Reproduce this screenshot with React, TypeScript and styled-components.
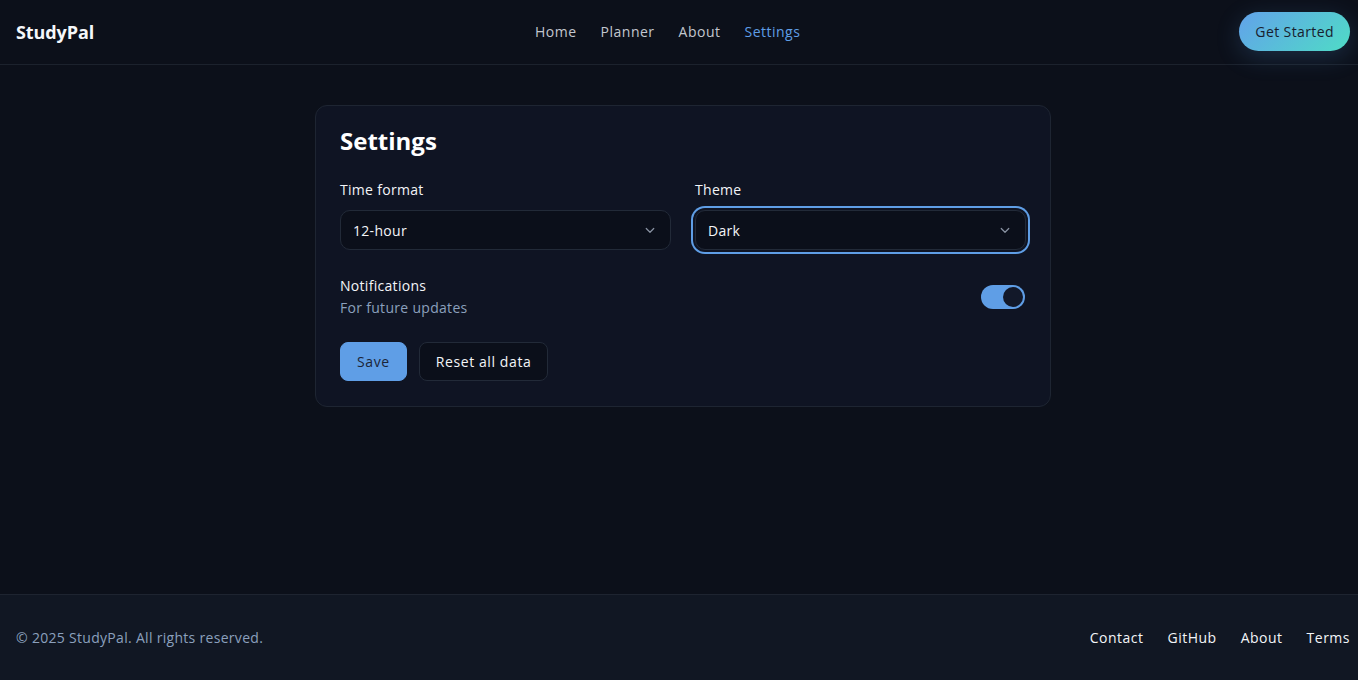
import React, { useState } from "react";
import styled, { createGlobalStyle } from "styled-components";

const Global = createGlobalStyle`
  * { box-sizing: border-box; }
  html, body { margin: 0; padding: 0; background: #0c101a; }
  body { font-family: "Open Sans", "Liberation Sans", sans-serif; color: #f1f4f9; letter-spacing: 0.3px; }
`;

const Page = styled.div`
  min-height: 680px;
  display: flex;
  flex-direction: column;
  background: #0c101a;
`;

const Header = styled.header`
  height: 65px;
  display: flex;
  align-items: center;
  justify-content: space-between;
  padding: 0 8px 1px 16px;
  border-bottom: 1px solid #1c222d;
`;

const Logo = styled.div`
  font-size: 18px;
  font-weight: 700;
  letter-spacing: -0.1px;
  color: #f5f7fa;
`;

const Nav = styled.nav`
  display: flex;
  gap: 24px;
  margin-left: 2px;
`;

const NavLink = styled.a<{ $active?: boolean }>`
  font-size: 14px;
  font-weight: 500;
  letter-spacing: 0.5px;
  color: ${(p) => (p.$active ? "#5f9ee6" : "#c3c7cf")};
  text-decoration: none;
`;

const CTA = styled.button`
  height: 39px;
  padding: 0 16px;
  border: none;
  border-radius: 999px;
  font-family: inherit;
  font-size: 14px;
  letter-spacing: 0.4px;
  color: #18202e;
  background: linear-gradient(135deg, #62a2ea 0%, #4fdcc6 100%);
  box-shadow: 0 6px 24px rgba(80, 150, 220, 0.22);
`;

const Main = styled.main`
  flex: 1;
  padding: 40px 16px 40px 24px;
`;

const Card = styled.section`
  max-width: 736px;
  margin: 0 auto;
  background: #0f1423;
  border: 1px solid #1e2532;
  border-radius: 12px;
  padding: 19px 24px 25px;
`;

const Title = styled.h1`
  margin: 0 0 23px;
  font-size: 24px;
  font-weight: 700;
  line-height: 32px;
  letter-spacing: 0;
  color: #ffffff;
`;

const Grid = styled.div`
  display: grid;
  grid-template-columns: 1fr 1fr;
  gap: 24px;
`;

const Field = styled.div`
  display: flex;
  flex-direction: column;
  gap: 10px;
`;

const Label = styled.label`
  font-size: 14px;
  font-weight: 500;
  line-height: 20px;
  color: #f3f5f8;
`;

const SelectWrap = styled.div<{ $focused?: boolean }>`
  position: relative;
  height: 40px;
  border-radius: 10px;
  border: 1px solid #222a38;
  background: #0b0f1a;
  box-shadow: ${(p) => (p.$focused ? "0 0 0 2px #0f1423, 0 0 0 4px #5f9ee6" : "none")};
  display: flex;
  align-items: center;
`;

const Select = styled.select`
  appearance: none;
  width: 100%;
  height: 100%;
  background: transparent;
  border: none;
  outline: none;
  color: #f3f5f8;
  font-family: inherit;
  letter-spacing: 0.3px;
  font-size: 14px;
  padding: 0 40px 0 12px;
`;

const Chevron = styled.svg`
  position: absolute;
  right: 11px;
  top: 50%;
  transform: translateY(-50%);
  pointer-events: none;
`;

const NotifyRow = styled.div`
  margin-top: 26px;
  display: flex;
  align-items: center;
  justify-content: space-between;
`;

const NotifyText = styled.div`
  display: flex;
  flex-direction: column;
  gap: 2px;
`;

const NotifyTitle = styled.div`
  font-size: 14px;
  font-weight: 500;
  line-height: 20px;
  color: #f3f5f8;
`;

const NotifySub = styled.div`
  font-size: 14px;
  line-height: 20px;
  color: #8ba0bd;
`;

const Toggle = styled.button<{ $on: boolean }>`
  width: 44px;
  height: 24px;
  border-radius: 999px;
  border: none;
  padding: 2px;
  margin-right: 1px;
  background: ${(p) => (p.$on ? "#5f9ee6" : "#2a3242")};
  display: flex;
  justify-content: ${(p) => (p.$on ? "flex-end" : "flex-start")};
  cursor: pointer;
`;

const Knob = styled.span`
  width: 20px;
  height: 20px;
  border-radius: 50%;
  background: #121829;
`;

const Actions = styled.div`
  margin-top: 24px;
  display: flex;
  gap: 12px;
`;

const Btn = styled.button<{ $primary?: boolean }>`
  height: 39px;
  padding: 0 16px;
  border-radius: 8px;
  font-family: inherit;
  font-size: 14px;
  letter-spacing: 0.6px;
  font-weight: ${(p) => (p.$primary ? 400 : 500)};
  color: ${(p) => (p.$primary ? "#1b2538" : "#f3f5f8")};
  background: ${(p) => (p.$primary ? "#5f9ee6" : "#0b0f1a")};
  border: 1px solid ${(p) => (p.$primary ? "#5f9ee6" : "#222a38")};
`;

const Footer = styled.footer`
  height: 86px;
  background: #111723;
  border-top: 1px solid #1e2430;
  display: flex;
  align-items: center;
  justify-content: space-between;
  padding: 0 8px 0 16px;
`;

const Copy = styled.div`
  font-size: 14px;
  color: #8ba0bd;
`;

const FootLinks = styled.div`
  display: flex;
  gap: 24px;
`;

const FootLink = styled.a`
  font-size: 14px;
  font-weight: 500;
  letter-spacing: 0.5px;
  color: #f3f5f8;
  text-decoration: none;
`;

const ChevronIcon = () => (
  <Chevron width="18" height="18" viewBox="0 0 24 24" fill="none" stroke="#8a93a3" strokeWidth="1.6" strokeLinecap="round" strokeLinejoin="round">
    <path d="M7 10l5 5 5-5" />
  </Chevron>
);

export default function App() {
  const [notify, setNotify] = useState(true);
  return (
    <Page>
      <Global />
      <Header>
        <Logo>StudyPal</Logo>
        <Nav>
          <NavLink href="#">Home</NavLink>
          <NavLink href="#">Planner</NavLink>
          <NavLink href="#">About</NavLink>
          <NavLink href="#" $active>Settings</NavLink>
        </Nav>
        <CTA>Get Started</CTA>
      </Header>
      <Main>
        <Card>
          <Title>Settings</Title>
          <Grid>
            <Field>
              <Label>Time format</Label>
              <SelectWrap>
                <Select defaultValue="12">
                  <option value="12">12-hour</option>
                  <option value="24">24-hour</option>
                </Select>
                <ChevronIcon />
              </SelectWrap>
            </Field>
            <Field>
              <Label>Theme</Label>
              <SelectWrap $focused>
                <Select defaultValue="dark">
                  <option value="dark">Dark</option>
                  <option value="light">Light</option>
                </Select>
                <ChevronIcon />
              </SelectWrap>
            </Field>
          </Grid>
          <NotifyRow>
            <NotifyText>
              <NotifyTitle>Notifications</NotifyTitle>
              <NotifySub>For future updates</NotifySub>
            </NotifyText>
            <Toggle $on={notify} onClick={() => setNotify(!notify)} aria-label="Notifications">
              <Knob />
            </Toggle>
          </NotifyRow>
          <Actions>
            <Btn $primary>Save</Btn>
            <Btn>Reset all data</Btn>
          </Actions>
        </Card>
      </Main>
      <Footer>
        <Copy>© 2025 StudyPal. All rights reserved.</Copy>
        <FootLinks>
          <FootLink href="#">Contact</FootLink>
          <FootLink href="#">GitHub</FootLink>
          <FootLink href="#">About</FootLink>
          <FootLink href="#">Terms</FootLink>
        </FootLinks>
      </Footer>
    </Page>
  );
}
